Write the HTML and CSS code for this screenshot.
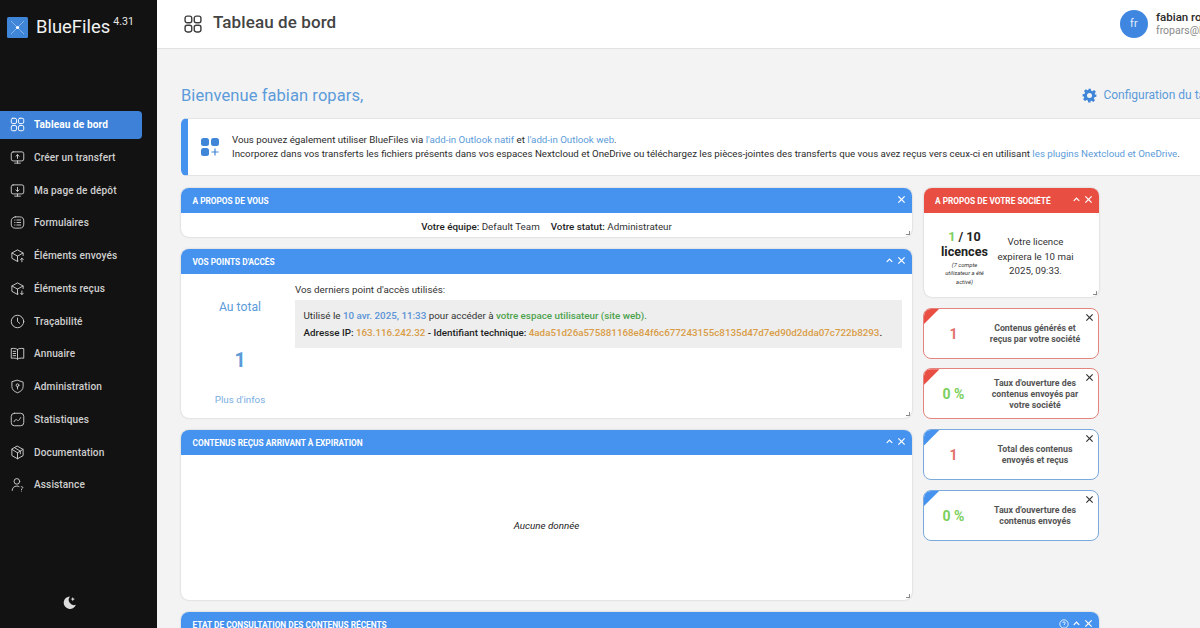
FILE: index.html
```html
<!DOCTYPE html>
<html lang="fr">
<head>
<meta charset="utf-8">
<title>BlueFiles - Tableau de bord</title>
<link rel="stylesheet" href="styles.css">
</head>
<body>
<div class="app">
  <aside class="sidebar">
    <div class="brand">
      <svg class="logo" viewBox="0 0 21 21"><rect width="21" height="21" rx="1.5" fill="#3f86d8"/><path d="M4 4l13 13M17 4L4 17" stroke="#a9cdf2" stroke-width=".7"/><circle cx="10.5" cy="10.5" r="1.6" fill="#fff"/></svg>
      <span class="brand-name">BlueFiles</span><span class="brand-version">4.31</span>
    </div>
    <nav class="nav">
      <a class="nav-item active"><svg class="nav-icon" viewBox="0 0 24 24"><rect x="2" y="2" width="8.500" height="8.500" rx="2.500"/><rect x="13.500" y="2" width="8.500" height="8.500" rx="2.500"/><rect x="2" y="13.500" width="8.500" height="8.500" rx="2.500"/><rect x="13.500" y="13.500" width="8.500" height="8.500" rx="2.500"/></svg>Tableau de bord</a>
      <a class="nav-item"><svg class="nav-icon" viewBox="0 0 24 24"><rect x="2" y="3" width="20" height="14.500" rx="3"/><path d="M12 21v-3.500M7.500 21h9M12 13.500V7.500M9.500 10l2.500-2.500L14.500 10"/></svg>Créer un transfert</a>
      <a class="nav-item"><svg class="nav-icon" viewBox="0 0 24 24"><rect x="2" y="3" width="20" height="14.500" rx="3"/><path d="M12 21v-3.500M7.500 21h9M12 7v6.500M9.500 11l2.500 2.500 2.500-2.500"/></svg>Ma page de dépôt</a>
      <a class="nav-item"><svg class="nav-icon" viewBox="0 0 24 24"><rect x="2" y="3" width="20" height="18" rx="6.500"/><path d="M11 8h6M11 12h6M11 16h6M7.500 8h.5M7.500 12h.5M7.500 16h.5"/></svg>Formulaires</a>
      <a class="nav-item"><svg class="nav-icon" viewBox="0 0 24 24"><path d="M21 12V8l-9-5-9 5v8.500l9 5 1-.6M3.300 8l8.700 5 8.700-5M12 13v8"/><path d="M19 22v-5.500M16.800 18.500l2.200-2.200 2.200 2.200"/></svg>Éléments envoyés</a>
      <a class="nav-item"><svg class="nav-icon" viewBox="0 0 24 24"><path d="M21 12V8l-9-5-9 5v8.500l9 5 1-.6M3.300 8l8.700 5 8.700-5M12 13v8"/><path d="M19 16v5.500M16.800 19.500l2.200 2.200 2.200-2.200"/></svg>Éléments reçus</a>
      <a class="nav-item"><svg class="nav-icon" viewBox="0 0 24 24"><circle cx="12" cy="12" r="10"/><path d="M12 6.500V12l3.500 3"/></svg>Traçabilité</a>
      <a class="nav-item"><svg class="nav-icon" viewBox="0 0 24 24"><path d="M12 5.500C10 4 7 3.500 2 4v15.500c5-.5 8 0 10 1.500 2-1.500 5-2 10-1.500V4c-5-.5-8 0-10 1.500zM12 5.500V21M5 8.500h4M5 12h4M5 15.500h4"/></svg>Annuaire</a>
      <a class="nav-item"><svg class="nav-icon" viewBox="0 0 24 24"><path d="M12 2l9 3v7c0 5-3.500 8-9 10-5.500-2-9-5-9-10V5z"/><circle cx="12" cy="10" r="2.200"/><path d="M12 12.200V16"/></svg>Administration</a>
      <a class="nav-item"><svg class="nav-icon" viewBox="0 0 24 24"><rect x="2" y="2" width="20" height="20" rx="5"/><path d="M6.500 15.500c2-4 3.500-4 5-2.500s3 1 5.500-4"/></svg>Statistiques</a>
      <a class="nav-item"><svg class="nav-icon" viewBox="0 0 24 24"><path d="M12 2l9 5v10l-9 5-9-5V7zM3.300 7l8.700 5.500L20.700 7M12 12.500V22M7.500 4.500l9 5.200V14"/></svg>Documentation</a>
      <a class="nav-item"><svg class="nav-icon" viewBox="0 0 24 24"><circle cx="11" cy="7" r="4.500"/><path d="M3.500 21.500c0-4 3-7 7.500-7 1.500 0 2.500.3 3.500.8M18 15.500c2-1 3.500 1.500 1.500 2.800-.8.500-1.200 1-1.200 1.700M18.300 22.500v.1"/></svg>Assistance</a>
    </nav>
    <div class="theme">
      <svg class="theme-icon" viewBox="0 0 16 16"><path d="M8.500 1.500a6.700 6.700 0 1 0 6.300 9 5.700 5.700 0 0 1-6.300-9z"/><path d="M11.500 2l.7 1.600 1.600.7-1.600.7-.7 1.600-.7-1.600-1.600-.7 1.600-.7z"/></svg>
    </div>
  </aside>

  <div class="main">
    <header class="topbar">
      <svg class="title-icon" viewBox="0 0 24 24"><rect x="2.500" y="2.500" width="8" height="8" rx="2.500"/><rect x="13.500" y="2.500" width="8" height="8" rx="2.500"/><rect x="2.500" y="13.500" width="8" height="8" rx="2.500"/><rect x="13.500" y="13.500" width="8" height="8" rx="2.500"/></svg>
      <h1 class="page-title">Tableau de bord</h1>
      <div class="user">
        <span class="avatar">fr</span>
        <div class="user-text">
          <div class="user-name">fabian ropars</div>
          <div class="user-mail">fropars@bluefiles.com</div>
        </div>
      </div>
    </header>

    <div class="content">
      <div class="welcome">
        <h2 class="welcome-title">Bienvenue fabian ropars,</h2>
        <a class="config">
          <svg class="gear" viewBox="0 0 24 24"><path fill-rule="evenodd" d="M10 1h4l.7 3.200 1.900.8 2.800-1.800 2.800 2.800-1.800 2.800.8 1.900L23 10v4l-3.200.7-.8 1.900 1.800 2.800-2.800 2.800-2.800-1.800-1.900.8L14 23h-4l-.7-3.200-1.900-.8-2.800 1.800-2.800-2.800 1.800-2.800-.8-1.900L1 14v-4l3.200-.7.8-1.900L3.200 4.600 6 1.800l2.800 1.800 1.900-.8zM12 8a4 4 0 1 0 0 8 4 4 0 0 0 0-8z"/></svg>
          Configuration du tableau de bord
        </a>
      </div>

      <div class="notice">
        <svg class="notice-icon" viewBox="0 0 18 18"><rect x="0" y="0" width="8" height="8" rx="2.500"/><rect x="10" y="0" width="8" height="8" rx="2.500"/><rect x="0" y="10" width="8" height="8" rx="2.500"/><path d="M14 10.500v7M10.500 14h7" class="plus"/></svg>
        <p class="notice-text">Vous pouvez également utiliser BlueFiles via <a class="link">l'add-in Outlook natif</a> et <a class="link">l'add-in Outlook web</a>.<br>Incorporez dans vos transferts les fichiers présents dans vos espaces Nextcloud et OneDrive ou téléchargez les pièces-jointes des transferts que vous avez reçus vers ceux-ci en utilisant <a class="link">les plugins Nextcloud et OneDrive</a>.</p>
      </div>

      <div class="board">
        <div class="col-left">
          <section class="card card-about">
            <div class="card-head"><span class="card-title">A propos de vous</span><span class="card-tools"><svg class="tool" viewBox="0 0 10 10"><path d="M1.500 1.500l7 7M8.500 1.500l-7 7"/></svg></span></div>
            <div class="about-body"><span><b>Votre équipe:</b> Default Team</span><span><b>Votre statut:</b> Administrateur</span><i class="grip"></i></div>
          </section>

          <section class="card card-access">
            <div class="card-head"><span class="card-title">Vos points d'accès</span><span class="card-tools"><svg class="tool" viewBox="0 0 10 10"><path d="M2 6.500l3-3 3 3"/></svg><svg class="tool" viewBox="0 0 10 10"><path d="M1.500 1.500l7 7M8.500 1.500l-7 7"/></svg></span></div>
            <div class="access-body">
              <div class="access-total">
                <div class="total-label">Au total</div>
                <div class="total-value">1</div>
                <a class="total-more">Plus d'infos</a>
              </div>
              <div class="access-detail">
                <p class="detail-intro">Vos derniers point d'accès utilisés:</p>
                <div class="detail-box">
                  <p class="detail-line">Utilisé le <b class="c-blue">10 avr. 2025, 11:33</b> pour accéder à <b class="c-green">votre espace utilisateur (site web).</b></p>
                  <p class="detail-line"><b>Adresse IP: <span class="c-orange">163.116.242.32</span> - Identifiant technique: <span class="c-orange">4ada51d26a575881168e84f6c677243155c8135d47d7ed90d2dda07c722b8293</span>.</b></p>
                </div>
              </div>
            </div>
            <i class="grip"></i>
          </section>

          <section class="card card-expire">
            <div class="card-head"><span class="card-title">Contenus reçus arrivant à expiration</span><span class="card-tools"><svg class="tool" viewBox="0 0 10 10"><path d="M2 6.500l3-3 3 3"/></svg><svg class="tool" viewBox="0 0 10 10"><path d="M1.500 1.500l7 7M8.500 1.500l-7 7"/></svg></span></div>
            <div class="expire-body"><em>Aucune donnée</em></div>
            <i class="grip"></i>
          </section>
        </div>

        <div class="col-right">
          <section class="card card-company">
            <div class="card-head head-red"><span class="card-title">A propos de votre société</span><span class="card-tools"><svg class="tool" viewBox="0 0 10 10"><path d="M2 6.500l3-3 3 3"/></svg><svg class="tool" viewBox="0 0 10 10"><path d="M1.500 1.500l7 7M8.500 1.500l-7 7"/></svg></span></div>
            <div class="company-body">
              <div class="licence-count">
                <div class="licence-num"><span class="c-lime">1</span> / 10<br>licences</div>
                <div class="licence-note">(7 compte utilisateur a été activé)</div>
              </div>
              <div class="licence-expiry">Votre licence expirera le 10 mai 2025, 09:33.</div>
            </div>
            <i class="grip"></i>
          </section>

          <section class="stat stat-red">
            <div class="stat-value c-salmon">1</div><div class="stat-label">Contenus générés et reçus par votre société</div>
            <svg class="stat-close" viewBox="0 0 10 10"><path d="M1.500 1.500l7 7M8.500 1.500l-7 7"/></svg>
          </section>
          <section class="stat stat-red">
            <div class="stat-value c-lime">0 %</div><div class="stat-label">Taux d'ouverture des contenus envoyés par votre société</div>
            <svg class="stat-close" viewBox="0 0 10 10"><path d="M1.500 1.500l7 7M8.500 1.500l-7 7"/></svg>
          </section>
          <section class="stat stat-blue">
            <div class="stat-value c-salmon">1</div><div class="stat-label">Total des contenus envoyés et reçus</div>
            <svg class="stat-close" viewBox="0 0 10 10"><path d="M1.500 1.500l7 7M8.500 1.500l-7 7"/></svg>
          </section>
          <section class="stat stat-blue">
            <div class="stat-value c-lime">0 %</div><div class="stat-label">Taux d'ouverture des contenus envoyés</div>
            <svg class="stat-close" viewBox="0 0 10 10"><path d="M1.500 1.500l7 7M8.500 1.500l-7 7"/></svg>
          </section>
        </div>

        <section class="card card-recent">
          <div class="card-head"><span class="card-title">Etat de consultation des contenus récents</span><span class="card-tools"><svg class="tool tool-help" viewBox="0 0 12 12"><circle cx="6" cy="6" r="5"/><path d="M4.500 4.800c0-2 3-2 3 0 0 1.200-1.500 1.200-1.500 2.400M6 8.800v.4"/></svg><svg class="tool" viewBox="0 0 10 10"><path d="M2 6.500l3-3 3 3"/></svg><svg class="tool" viewBox="0 0 10 10"><path d="M1.500 1.500l7 7M8.500 1.500l-7 7"/></svg></span></div>
          <div class="recent-body"></div>
        </section>
      </div>
    </div>
  </div>
</div>
</body>
</html>
```
FILE: styles.css
```css
* { box-sizing: border-box; }
html, body { margin: 0; height: 100%; overflow: hidden; }
body { font-family: Roboto, "Liberation Sans", sans-serif; color: #222; background: #f3f3f4; }
p, h1, h2 { margin: 0; font-weight: inherit; }

.app { display: flex; width: 1200px; height: 628px; overflow: hidden; }

/* Sidebar */
.sidebar { flex: 0 0 157px; background: #121212; display: flex; flex-direction: column; color: #d6d6d6; }
.brand { display: flex; align-items: flex-start; height: 110.500px; padding: 17px 0 0 7px; }
.logo { width: 21px; height: 21px; }
.brand-name { font-size: 18.400px; color: #f2f2f2; margin: -1px 0 0 8px; line-height: 21px; }
.brand-version { font-size: 10.600px; color: #e6e6e6; margin-left: 3px; line-height: 9px; }
.nav { display: flex; flex-direction: column; gap: 4.750px; }
.nav-item { display: flex; align-items: center; gap: 9px; height: 28px; width: 142px; padding-left: 10px; font-size: 10.100px; font-weight: 500; letter-spacing: .1px; color: #cfcfcf; border-radius: 0 4px 4px 0; }
.nav-item.active { background: #3d82d8; color: #fff; font-weight: 700; }
.nav-icon { width: 15px; height: 15px; flex: none; fill: none; stroke: currentColor; stroke-width: 1.500; stroke-linecap: round; stroke-linejoin: round; }
.theme { margin-top: auto; height: 33px; padding-left: 62px; display: flex; }
.theme-icon { width: 15px; height: 15px; fill: #dcdcdc; }

/* Main */
.main { flex: 0 0 1043px; display: flex; flex-direction: column; min-width: 0; overflow: hidden; }
.topbar { flex: 0 0 49px; background: #fff; border-bottom: 1px solid #e2e2e2; display: flex; align-items: center; padding: 0 0 1px 26px; overflow: hidden; }
.title-icon { width: 20px; height: 20px; flex: none; fill: none; stroke: #3d3d3d; stroke-width: 1.700; }
.page-title { font-size: 17px; font-weight: 500; color: #444; margin: -4px 0 0 10px; letter-spacing: .1px; }
.user { margin-left: auto; display: flex; align-items: center; gap: 8px; flex: 0 0 80px; min-width: 0; width: 80px; }
.avatar { flex: none; width: 28px; height: 28px; border-radius: 50%; background: #3f86e0; color: #e8f1fc; font-size: 10.500px; letter-spacing: .5px; display: flex; align-items: center; justify-content: center; }
.user-text { white-space: nowrap; line-height: 14px; }
.user-name { font-size: 11.500px; font-weight: 500; color: #2a2a2a; }
.user-mail { font-size: 10.500px; color: #8a8a8a; }

.content { flex: 1; padding: 0 0 0 24px; min-height: 0; width: 1100px; }
.welcome { display: flex; align-items: center; height: 69px; padding-top: 23px; white-space: nowrap; }
.welcome-title { font-size: 16.500px; color: #5b9bd9; letter-spacing: .08px; }
.config { position: relative; display: flex; align-items: center; gap: 6px; margin-left: 719px; font-size: 12px; color: #5b9bd9; }
.gear { width: 15px; height: 15px; fill: #3f86d8; flex: none; }

.notice { display: flex; align-items: center; width: 1080px; height: 58px; background: #fff; border: 1px solid #e4e4e4; border-left: 7px solid #4593ef; border-radius: 6px 0 0 6px; padding: 0 0 0 13px; margin-bottom: 12px; }
.notice-icon { width: 18px; height: 18px; fill: #3f86d8; flex: none; }
.plus { fill: none; stroke: #3f86d8; stroke-width: 1.200; }
.notice-text { margin-left: 13px; font-size: 9.720px; line-height: 14.500px; color: #2b2b2b; white-space: nowrap; }
.link { color: #5b9bd9; }

.board { display: grid; grid-template-columns: 731px 176.500px; column-gap: 10.500px; row-gap: 12px; width: 918px; align-items: start; }
.col-left { display: flex; flex-direction: column; gap: 12px; }
.col-right { display: flex; flex-direction: column; }

.card { position: relative; background: #fff; border-radius: 8px; box-shadow: 0 0 2px rgba(0,0,0,.22); overflow: hidden; }
.card-head { display: flex; align-items: center; justify-content: space-between; height: 25px; padding: 0 6px 0 11.500px; background: #4593ef; color: #fff; }
.head-red { background: #e94e43; }
.card-title { font-size: 8.300px; font-weight: 700; text-transform: uppercase; }
.card-tools { display: flex; align-items: center; gap: 3px; margin-top: -2px; }
.tool { width: 9px; height: 9px; fill: none; stroke: #fff; stroke-width: 1.400; }
.tool-help { width: 10px; height: 10px; stroke-width: 1; }
.grip { position: absolute; right: 2px; bottom: 2px; width: 4px; height: 4px; border-right: 1px solid #8b8b8b; border-bottom: 1px solid #8b8b8b; }

.card-about { height: 49px; }
.about-body { display: flex; justify-content: center; align-items: center; gap: 11px; height: 24px; padding-top: 2px; font-size: 9.800px; color: #333; }
.about-body b { color: #1e1e1e; font-weight: 500; }

.card-access { height: 169px; }
.access-body { display: flex; height: 144px; }
.access-total { flex: 0 0 114px; padding-left: 4px; display: flex; flex-direction: column; align-items: center; color: #5b9bd9; }
.total-label { font-size: 12.200px; margin-top: 26px; }
.total-value { font-size: 19.500px; font-weight: 700; margin-top: 35px; color: #5b9bd9; }
.total-more { font-size: 9.800px; margin-top: 22px; color: #7aaee2; }
.access-detail { flex: 1; min-width: 0; padding: 9px 10px 0 0; font-size: 9.800px; }
.detail-intro { color: #333; line-height: 14px; margin-bottom: 3px; }
.detail-box { background: #eeeeee; height: 48px; padding: 6.500px 8.500px; }
.detail-line { line-height: 17px; white-space: nowrap; color: #333; }
.detail-line b { font-weight: 500; color: #1e1e1e; }
.c-blue, .detail-line b.c-blue { color: #5b93d6; }
.c-green, .detail-line b.c-green { color: #4ca24c; }
.c-orange { color: #d99c45; }
.c-lime { color: #7bcf5d; }
.c-salmon { color: #e2716a; }

.card-expire { height: 170px; }
.expire-body { height: 145px; padding-bottom: 4px; display: flex; align-items: center; justify-content: center; font-size: 9.800px; color: #222; }

.card-company { height: 109px; margin: 0 0.500px 10.500px 1px; }
.company-body { display: flex; height: 84px; padding-left: 11px; }
.licence-count { flex: 0 0 60px; text-align: center; padding-top: 16px; }
.licence-num { font-size: 12.600px; font-weight: 700; line-height: 15px; color: #222; }
.licence-note { width: 44px; margin: 1.500px auto 0; font-size: 5.800px; font-style: italic; line-height: 8.800px; color: #333; }
.licence-expiry { flex: 1; padding: 22px 23px 0 1px; text-align: center; font-size: 9.700px; line-height: 14.500px; color: #333; }

.stat { position: relative; height: 51px; margin-bottom: 9.700px; padding-top: 1px; background: #fff; border: 1px solid; border-radius: 8px; display: flex; align-items: center; overflow: hidden; }
.stat::before { content: ""; position: absolute; left: 0; top: 0; width: 16px; height: 16px; clip-path: polygon(0 0, 100% 0, 0 100%); }
.stat-red { border-color: #e3857e; }
.stat-red::before { background: #e94e43; }
.stat-blue { border-color: #7aa9dd; }
.stat-blue::before { background: #4593ef; }
.stat-value { flex: 0 0 60px; text-align: center; font-size: 14px; font-weight: 700; }
.stat-label { flex: 0 0 100px; margin-left: 1.500px; text-align: center; font-size: 8.800px; font-weight: 700; line-height: 10.800px; color: #555; }
.stat-close { position: absolute; right: 4px; top: 4px; width: 9px; height: 9px; fill: none; stroke: #333; stroke-width: 1.300; }

.card-recent { grid-column: 1 / -1; height: 120px; }
.recent-body { height: 95px; }
```
